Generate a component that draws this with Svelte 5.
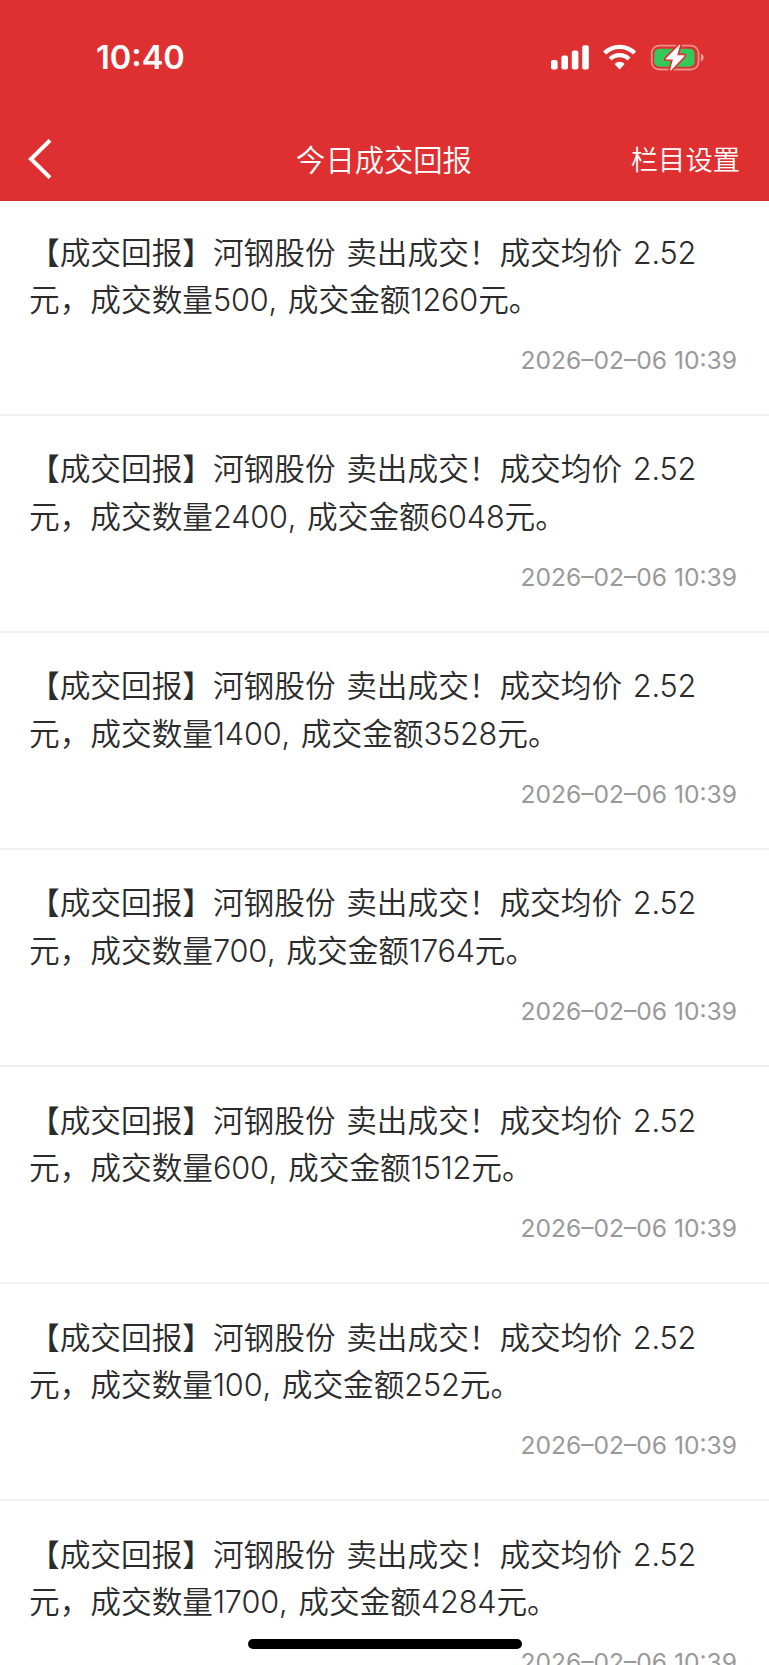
<script>
    const time = '2026–02–06 10:39';

    const reports = [
        { amount: 500, total: 1260 },
        { amount: 2400, total: 6048 },
        { amount: 1400, total: 3528 },
        { amount: 700, total: 1764 },
        { amount: 600, total: 1512 },
        { amount: 100, total: 252 },
        { amount: 1700, total: 4284 }
    ];
</script>

<div class="screen">
    <header>
        <div class="status-bar">
            <span class="clock">10:40</span>
            <svg class="status-icons" width="160" height="32" viewBox="0 0 160 32">
                <g fill="#fff">
                    <rect x="1" y="19" width="6.6" height="9.4" rx="2" />
                    <rect x="11.4" y="14.6" width="6.6" height="13.8" rx="2" />
                    <rect x="21.8" y="9.4" width="6.6" height="19" rx="2" />
                    <rect x="32.2" y="4.2" width="6.6" height="24.2" rx="2" />
                </g>
                <g fill="none" stroke="#fff" stroke-width="4.3">
                    <path d="M54.6 12.1a21.2 21.2 0 0 1 30 0" />
                    <path d="M60.2 18a13.3 13.3 0 0 1 18.8 0" />
                </g>
                <path fill="#fff" d="M64.6 22.9a7.1 7.1 0 0 1 10 0l-4.2 4.8q-.8.9-1.6 0z" />
                <rect x="101.7" y="4.7" width="46.8" height="23.8" rx="7.6" fill="none" stroke="#fff" stroke-opacity=".45" stroke-width="1.8" />
                <path fill="#fff" fill-opacity=".5" d="M150.9 12.4q2.8 1.1 2.8 4.1t-2.8 4.1z" />
                <rect x="104.2" y="7.7" width="40.4" height="18" rx="5" fill="#34c759" />
                <path
                    fill="#fff"
                    stroke="#de3030"
                    stroke-width="3.4"
                    stroke-linejoin="round"
                    paint-order="stroke"
                    d="M129.2 3.9 116 17.3q-.9 1.1.4 1.1h6.5l-2.8 10.3q-.1 1.4 1 .5l13.1-13.8q.9-1.1-.4-1.1h-6.6l2.8-9.9q.1-1.4-.8-.5z"
                />
            </svg>
        </div>
        <nav>
            <button type="button" class="back" aria-label="返回">
                <svg width="24" height="40" viewBox="0 0 24 40" fill="none" stroke="#fff" stroke-width="4">
                    <path d="M22 1.3 3 20l19 18.7" />
                </svg>
            </button>
            <h1>今日成交回报</h1>
            <button type="button" class="settings">栏目设置</button>
        </nav>
    </header>

    <ul>
        {#each reports as report}
            <li>
                <p>【成交回报】河钢股份&nbsp;卖出成交！成交均价&nbsp;<span>2.52</span>元，成交数量<span>{report.amount}</span>, 成交金额<span>{report.total}</span>元。</p>
                <time>{time}</time>
            </li>
        {/each}
    </ul>

    <div class="home-indicator"></div>
</div>

<style>
    .screen {
        position: relative;
        height: 1665px;
        overflow: hidden;
        background: #fff;
        color: #2b2b2b;
        font-family: Inter, "Noto Sans CJK SC", sans-serif;
        font-weight: 350;
    }

    header {
        height: 201px;
        background: #de3030;
        color: #fff;
    }

    .status-bar {
        display: flex;
        justify-content: space-between;
        align-items: center;
        height: 114px;
        padding: 0 59px 0 96px;
        box-sizing: border-box;
    }

    .clock {
        font-size: 32.6px;
        font-weight: 600;
    }

    .status-icons {
        display: block;
    }

    nav {
        display: grid;
        grid-template-columns: 1fr auto 1fr;
        align-items: center;
        height: 90px;
        padding: 0 29px 0 28px;
    }

    button {
        padding: 0;
        border: none;
        background: none;
        color: inherit;
        font: inherit;
    }

    .back {
        justify-self: start;
        display: flex;
    }

    h1 {
        margin: 0;
        padding-bottom: 3px;
        font-size: 29.3px;
        font-weight: 350;
    }

    .settings {
        justify-self: end;
        padding-bottom: 3px;
        font-size: 27.3px;
    }

    ul {
        margin: 0;
        padding: 0;
        list-style: none;
    }

    li {
        display: flex;
        flex-direction: column;
        height: 217.1px;
        padding: 29.3px 32px 0 29px;
        border-bottom: 2px solid #f1f1f1;
        box-sizing: border-box;
    }

    li:first-child {
        height: 215px;
        padding-top: 27.6px;
    }

    p {
        margin: 0;
        font-size: 30.67px;
        line-height: 47.3px;
        word-spacing: 2px;
    }

    p span {
        letter-spacing: -0.15px;
    }

    time {
        align-self: flex-end;
        margin-top: 18px;
        color: #999;
        font-size: 24.6px;
        font-weight: 400;
        line-height: 38px;
    }

    .home-indicator {
        position: absolute;
        bottom: 16px;
        left: 50%;
        width: 274px;
        height: 10px;
        border-radius: 5px;
        background: #000;
        transform: translateX(-50%);
    }
</style>
